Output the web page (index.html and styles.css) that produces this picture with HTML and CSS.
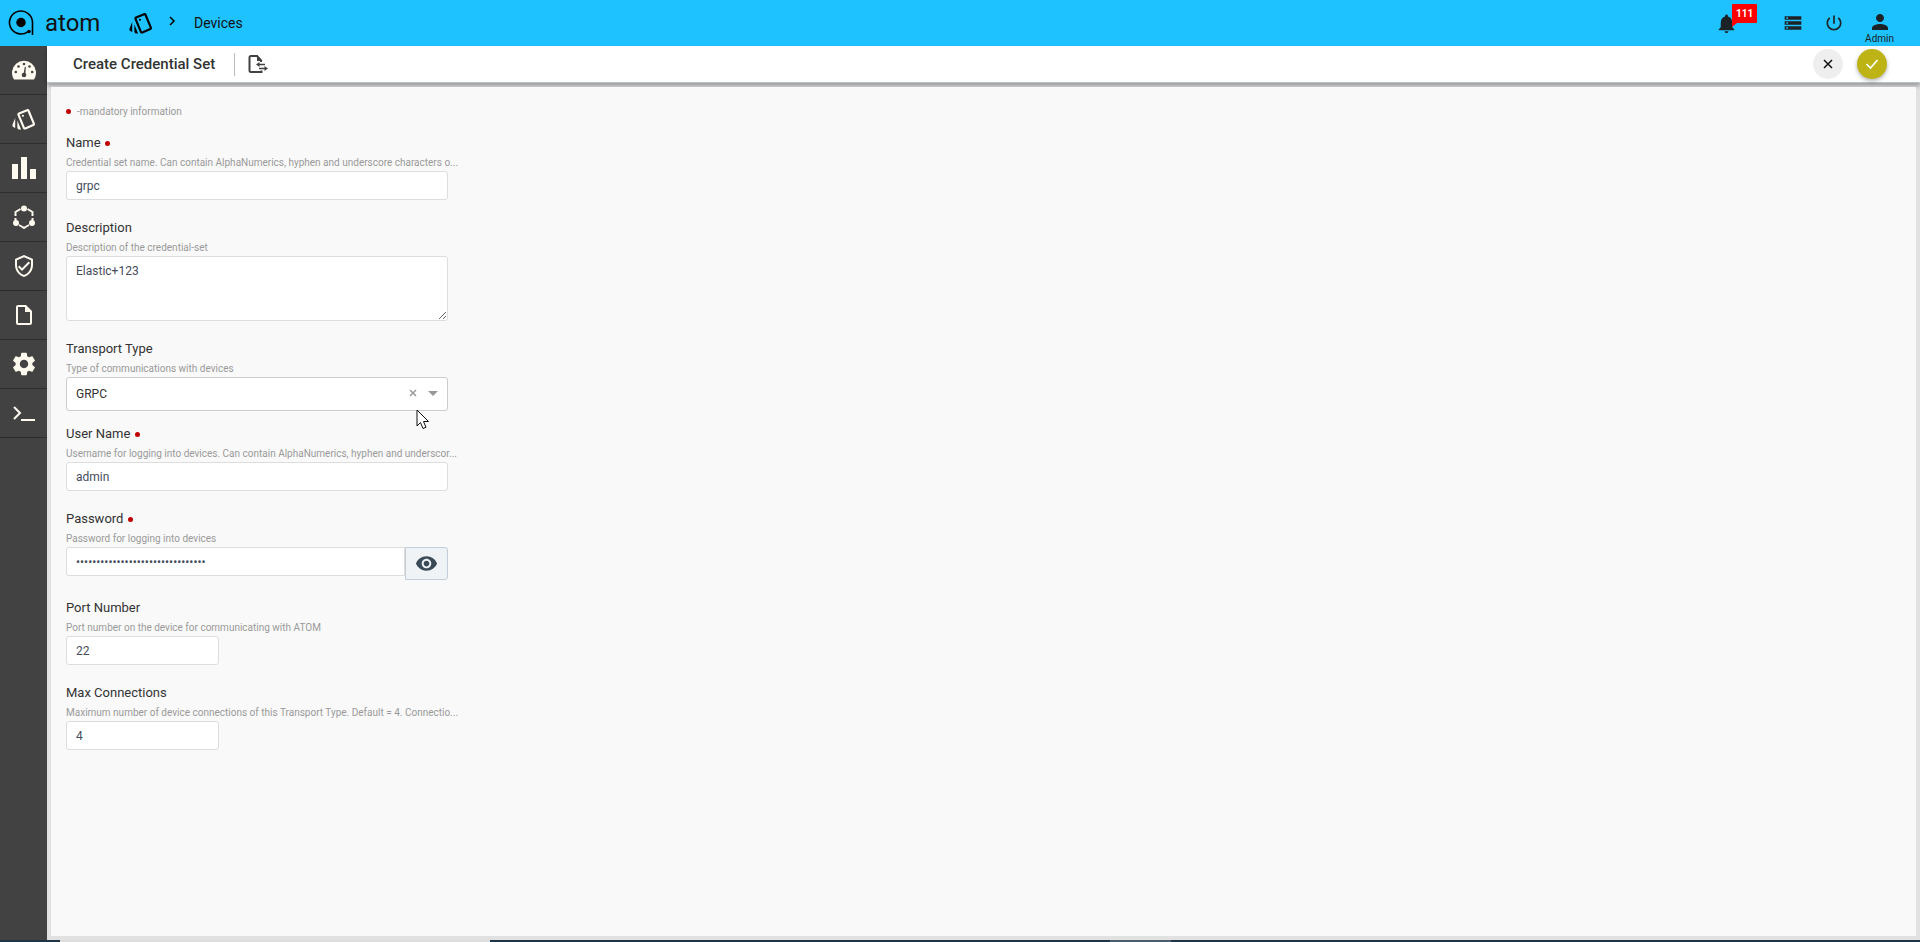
FILE: index.html
```html
<!DOCTYPE html>
<html lang="en">
<head>
	<meta charset="UTF-8">
	<title>atom - Create Credential Set</title>
	<link rel="stylesheet" href="styles.css">
</head>
<body>
	<!-- top bar -->
	<header class="topbar">
		<a class="logo" href="#">
			<svg width="28" height="28" viewBox="0 0 28 28">
				<path d="M24.5 26V13.500A11.500 11.500 0 1 0 20 22.600" fill="none" stroke="#000" stroke-width="1.600"/>
				<circle cx="13" cy="13.500" r="4.700"/>
				<circle cx="21" cy="22.500" r="1.800"/>
			</svg>
			<span>atom</span>
		</a>
		<nav class="breadcrumb">
			<a href="#" aria-label="Resources">
				<svg width="26" height="26" viewBox="0 0 24 24"><use href="#cards"/></svg>
			</a>
			<svg class="chevron" width="8" height="12" viewBox="0 0 8 12"><path d="M2 2l4 4-4 4" fill="none" stroke="#000" stroke-width="1.500"/></svg>
			<a href="#">Devices</a>
		</nav>
		<div class="tools">
			<button type="button" class="bell" aria-label="Notifications">
				<svg width="23" height="23" viewBox="0 0 24 24"><path d="M12 22c1.100 0 2-.9 2-2h-4c0 1.100.9 2 2 2zm6-6v-5c0-3.070-1.630-5.640-4.500-6.320V4c0-.83-.67-1.500-1.500-1.500s-1.500.67-1.500 1.500v.68C7.640 5.360 6 7.920 6 11v5l-2 2v1h16v-1l-2-2z"/></svg>
				<span class="badge">111</span>
			</button>
			<button type="button" aria-label="Tasks">
				<svg width="20" height="20" viewBox="0 0 24 24"><path d="M2 20h20v-4H2v4zm2-3h2v2H4v-2zM2 4v4h20V4H2zm4 3H4V5h2v2zm-4 7h20v-4H2v4zm2-3h2v2H4v-2z"/></svg>
			</button>
			<button type="button" aria-label="Log out">
				<svg width="20" height="20" viewBox="0 0 24 24"><path d="M13 3h-2v10h2V3zm4.830 2.170l-1.420 1.420C17.990 7.860 19 9.810 19 12c0 3.870-3.130 7-7 7s-7-3.130-7-7c0-2.190 1.010-4.140 2.580-5.420L6.170 5.170C4.230 6.820 3 9.260 3 12c0 4.970 4.030 9 9 9s9-4.030 9-9c0-2.740-1.230-5.180-3.170-6.830z"/></svg>
			</button>
			<button type="button" class="user">
				<svg width="24" height="24" viewBox="0 0 24 24"><path d="M12 12c2.210 0 4-1.790 4-4s-1.790-4-4-4-4 1.790-4 4 1.790 4 4 4zm0 2c-2.670 0-8 1.340-8 4v2h16v-2c0-2.660-5.330-4-8-4z"/></svg>
				<span>Admin</span>
			</button>
		</div>
	</header>

	<div class="layout">
		<!-- side menu -->
		<nav class="sidebar">
			<a href="#" aria-label="Dashboard">
				<svg width="24" height="20" viewBox="0 0 24 20">
					<path d="M2 19.500A12 12 0 1 1 22 19.500z"/>
					<g fill="#424242"><circle cx="3.800" cy="12" r="1.300"/><circle cx="6.500" cy="6.500" r="1.300"/><circle cx="12" cy="4" r="1.300"/><circle cx="17.500" cy="6.500" r="1.300"/><circle cx="20.200" cy="12" r="1.300"/><circle cx="12" cy="15" r="2.300"/><path d="M11.300 15l1.600-8.200 1 .2-.7 8z"/></g>
				</svg>
			</a>
			<a href="#" aria-label="Resources">
				<svg width="26" height="26" viewBox="0 0 24 24"><use href="#cards"/></svg>
			</a>
			<a href="#" aria-label="Reports">
				<svg width="24" height="24" viewBox="0 0 24 24"><path d="M0 8h6v15H0zM9 1h6v22H9zM18 13h6v10h-6z"/></svg>
			</a>
			<a href="#" aria-label="Topology">
				<svg width="24" height="24" viewBox="0 0 24 24">
					<path d="M8.500 4L3.500 7v4M15.500 4l5 3v4M3.500 13v3M20.500 13v3M7 20l3.500 2M17 20l-3.500 2M10.500 22l1.500 1 1.500-1" fill="none" stroke="#fffaf0" stroke-width="2"/>
					<circle cx="12" cy="3.500" r="3"/><circle cx="4" cy="18" r="3"/><circle cx="20" cy="18" r="3"/>
				</svg>
			</a>
			<a href="#" aria-label="Compliance">
				<svg width="24" height="24" viewBox="0 0 24 24"><path d="M12 1L3 5v6c0 5.550 3.840 10.740 9 12 5.160-1.260 9-6.450 9-12V5l-9-4zm7 10c0 4.520-2.980 8.690-7 9.930-4.020-1.240-7-5.410-7-9.930V6.300l7-3.110 7 3.110V11zm-11.590.59L6 13l4 4 8-8-1.410-1.420L10 14.170z"/></svg>
			</a>
			<a href="#" aria-label="Documents">
				<svg width="24" height="24" viewBox="0 0 24 24"><path d="M14 2H6c-1.100 0-2 .9-2 2v16c0 1.100.9 2 2 2h12c1.100 0 2-.9 2-2V8l-6-6zM6 20V4h7v5h5v11H6z"/></svg>
			</a>
			<a href="#" aria-label="Settings">
				<svg width="28" height="28" viewBox="0 0 24 24"><path d="M19.140 12.940c.04-.3.06-.61.06-.94 0-.32-.02-.64-.07-.94l2.030-1.580c.18-.14.23-.41.12-.61l-1.920-3.320c-.12-.22-.37-.29-.59-.22l-2.390.96c-.5-.38-1.030-.7-1.620-.94l-.36-2.540c-.04-.24-.24-.41-.48-.41h-3.840c-.24 0-.43.17-.47.41l-.36 2.540c-.59.24-1.130.57-1.620.94l-2.390-.96c-.22-.08-.47 0-.59.22L2.740 8.870c-.12.21-.08.47.12.61l2.030 1.580c-.05.3-.09.63-.09.94s.02.64.07.94l-2.030 1.580c-.18.14-.23.41-.12.61l1.920 3.320c.12.22.37.29.59.22l2.390-.96c.5.38 1.030.7 1.620.94l.36 2.540c.05.24.24.41.48.41h3.840c.24 0 .44-.17.47-.41l.36-2.540c.59-.24 1.130-.56 1.620-.94l2.390.96c.22.08.47 0 .59-.22l1.920-3.320c.12-.22.07-.47-.12-.61l-2.010-1.580zM12 15.600c-1.980 0-3.600-1.620-3.600-3.600s1.620-3.600 3.600-3.600 3.600 1.620 3.600 3.600-1.620 3.600-3.600 3.600z"/></svg>
			</a>
			<a href="#" aria-label="Terminal">
				<svg width="24" height="24" viewBox="0 0 24 24"><path d="M2 6l6 6-6 6M9 19h14" fill="none" stroke="#fffaf0" stroke-width="2"/></svg>
			</a>
		</nav>

		<main class="main">
			<div class="titlebar">
				<h1>Create Credential Set</h1>
				<button type="button" class="export" aria-label="Export">
					<svg width="20" height="20" viewBox="0 0 20 20">
						<path d="M13 8V6.500L9 2H3C2 2 1.500 2.500 1.500 3.500v13C1.500 17.500 2 18 3 18h10.500v-1.500" fill="none" stroke="#424242" stroke-width="2"/>
						<path d="M9 1l5.500 6H9zM11.500 8v5L8 10.500zM11 9.800h6v1.400h-6zM11 13.800h6v1.400h-6zM16.500 12l3.500 2.500-3.500 2.500z" fill="#424242"/>
					</svg>
				</button>
				<div class="actions">
					<button type="button" class="round cancel" aria-label="Cancel">
						<svg width="10" height="10" viewBox="0 0 10 10"><path d="M1 1l8 8M9 1L1 9" stroke="#111" stroke-width="1.500"/></svg>
					</button>
					<button type="submit" form="credential-form" class="round save" aria-label="Save">
						<svg width="14" height="12" viewBox="0 0 14 12"><path d="M1.500 6l4 4 7-8" fill="none" stroke="#fff" stroke-width="1.700"/></svg>
					</button>
				</div>
			</div>

			<div class="content">
				<form id="credential-form" class="form">
					<p class="mandatory"><i class="dot"></i>-mandatory information</p>

					<div class="field">
						<label for="name">Name <i class="dot"></i></label>
						<p class="hint">Credential set name. Can contain AlphaNumerics, hyphen and underscore characters o...</p>
						<input type="text" id="name" value="grpc">
					</div>

					<div class="field">
						<label for="description">Description</label>
						<p class="hint">Description of the credential-set</p>
						<textarea id="description">Elastic+123</textarea>
					</div>

					<div class="field field-select">
						<label for="transport">Transport Type</label>
						<p class="hint">Type of communications with devices</p>
						<div class="select-box">
							<select id="transport">
								<option>GRPC</option>
							</select>
							<button type="button" class="clear" aria-label="Clear">
								<svg width="8" height="8" viewBox="0 0 8 8"><path d="M1 1l6 6M7 1L1 7" stroke="#999" stroke-width="1.500"/></svg>
							</button>
							<svg class="caret" width="10" height="5" viewBox="0 0 10 5"><path d="M0 0h10L5 5z" fill="#999"/></svg>
							<svg class="pointer" width="14" height="21" viewBox="0 0 14 21"><path d="M1 1v16l3.500-3.500 2.500 6 3-1.200L7.500 12.500h5z" fill="#fff" stroke="#111" stroke-width="1"/></svg>
						</div>
					</div>

					<div class="field">
						<label for="username">User Name <i class="dot"></i></label>
						<p class="hint">Username for logging into devices. Can contain AlphaNumerics, hyphen and underscor...</p>
						<input type="text" id="username" value="admin">
					</div>

					<div class="field">
						<label for="password">Password <i class="dot"></i></label>
						<p class="hint">Password for logging into devices</p>
						<div class="password-box">
							<input type="password" id="password" value="12345678901234567890123456789012">
							<button type="button" aria-label="Show password">
								<svg width="23" height="23" viewBox="0 0 24 24"><path d="M12 4.500C7 4.500 2.730 7.610 1 12c1.730 4.390 6 7.500 11 7.500s9.270-3.110 11-7.500c-1.730-4.390-6-7.500-11-7.500zM12 17c-2.760 0-5-2.240-5-5s2.240-5 5-5 5 2.240 5 5-2.240 5-5 5zm0-8c-1.660 0-3 1.340-3 3s1.340 3 3 3 3-1.340 3-3-1.340-3-3-3z" fill="#3b4a57"/></svg>
							</button>
						</div>
					</div>

					<div class="field">
						<label for="port">Port Number</label>
						<p class="hint">Port number on the device for communicating with ATOM</p>
						<input type="text" id="port" class="short" value="22">
					</div>

					<div class="field">
						<label for="max">Max Connections</label>
						<p class="hint">Maximum number of device connections of this Transport Type. Default = 4. Connectio...</p>
						<input type="text" id="max" class="short" value="4">
					</div>
				</form>
			</div>
		</main>
	</div>

	<footer class="strip"><span class="strip-open"></span><span class="strip-item"></span></footer>

	<!-- shared icon -->
	<svg width="0" height="0" class="defs">
		<symbol id="cards" viewBox="0 0 24 24"><path d="M2.530 19.650l1.340.56v-9.030l-2.430 5.860c-.41 1.020.08 2.190 1.090 2.610zm19.500-3.700L17.070 3.980c-.31-.75-1.040-1.210-1.810-1.230-.26 0-.53.04-.79.15L7.100 5.950c-.75.31-1.210 1.030-1.230 1.800-.01.27.04.54.15.8l4.960 11.970c.31.76 1.050 1.220 1.830 1.230.26 0 .52-.05.77-.15l7.360-3.050c1.020-.42 1.510-1.590 1.090-2.600zm-9.200 3.800L7.870 7.790l7.350-3.040h.01l4.950 11.950-7.350 3.050zM5.880 19.750c0 1.100.9 2 2 2h1.450l-3.450-8.340v6.340z"/><circle cx="11" cy="9" r="1"/></symbol>
	</svg>
</body>
</html>
```

FILE: styles.css
```css
* {
	box-sizing: border-box;
}

body {
	margin: 0;
	height: 100vh;
	display: flex;
	flex-direction: column;
	font-family: Roboto, "Liberation Sans", sans-serif;
	font-size: 13px;
	color: #333;
}

button {
	border: none;
	background: none;
	padding: 0;
	font-family: inherit;
	cursor: pointer;
}

a {
	color: inherit;
	text-decoration: none;
}

svg {
	display: block;
}

.defs {
	position: absolute;
}

/* top bar */
.topbar {
	display: flex;
	align-items: center;
	height: 46px;
	flex-shrink: 0;
	padding: 0 26px 0 8px;
	background-color: #1ec2ff;
	color: #111;
}

.logo {
	display: flex;
	align-items: center;
	gap: 9px;
	width: 120px;
	font-size: 24px;
	line-height: 28px;
}

.breadcrumb {
	display: flex;
	align-items: center;
	font-size: 14px;
}

.chevron {
	margin: 0 18px 4px 14px;
}

.tools {
	display: flex;
	align-items: center;
	margin-left: auto;
	gap: 21px;
}

.tools svg {
	fill: #1c2226;
}

.bell {
	position: relative;
	margin-right: 24px;
}

.badge {
	position: absolute;
	left: 17px;
	top: -8px;
	width: 25px;
	height: 19px;
	line-height: 20px;
	border-radius: 1px;
	background-color: #f00;
	color: #fff;
	font-size: 10px;
	font-weight: bold;
	text-align: center;
}

.badge::after {
	content: "";
	position: absolute;
	left: 0;
	top: 19px;
	border-top: 4px solid #f00;
	border-right: 5px solid transparent;
}

.user {
	display: flex;
	flex-direction: column;
	align-items: center;
	padding-top: 8px;
	font-size: 10px;
	line-height: 10px;
	color: #1c2226;
}

/* layout */
.layout {
	display: flex;
	flex: 1;
	min-height: 0;
}

.sidebar {
	width: 47px;
	flex-shrink: 0;
	background-color: #424242;
}

.sidebar a {
	display: flex;
	align-items: center;
	justify-content: center;
	height: 49px;
	border-bottom: 1px solid #2e2e2e;
}

.sidebar svg {
	fill: #fffaf0;
}

.main {
	display: flex;
	flex-direction: column;
	flex: 1;
	min-width: 0;
	background-color: #e1e1e1;
}

.titlebar {
	display: flex;
	align-items: center;
	height: 37px;
	flex-shrink: 0;
	padding: 0 33px 0 26px;
	background-color: #fff;
	border-bottom: 1px solid #b8c4ca;
	box-shadow: 0 3px 4px rgba(0, 0, 0, 0.3);
}

.titlebar h1 {
	margin: 0;
	padding-right: 19px;
	border-right: 1px solid #bbb;
	font-size: 15px;
	font-weight: 500;
	line-height: 23px;
}

.export {
	margin-left: 13px;
}

.actions {
	display: flex;
	gap: 14px;
	margin-left: auto;
}

.round {
	display: flex;
	align-items: center;
	justify-content: center;
	width: 30px;
	height: 30px;
	border-radius: 50%;
}

.cancel {
	background-color: #eee;
}

.save {
	background-color: #bdb315;
	box-shadow: 0 2px 4px rgba(0, 0, 0, 0.3);
}

.content {
	flex: 1;
	min-height: 0;
	margin: 4px;
	padding: 14px 15px;
	background-color: #f9f9f9;
}

/* form */
.form {
	width: 382px;
}

.dot {
	display: inline-block;
	width: 5px;
	height: 5px;
	border-radius: 50%;
	background-color: #c00000;
	vertical-align: 1px;
}

.field .dot {
	margin-left: 1px;
}

.mandatory {
	margin: 0 0 9px;
	font-size: 10px;
	line-height: 22px;
	color: #999;
}

.mandatory .dot {
	margin-right: 6px;
}

.field {
	margin-bottom: 17px;
}

.field-select {
	margin-bottom: 12px;
}

.field label {
	display: block;
	line-height: 22px;
}

.hint {
	margin: 0;
	font-size: 10px;
	line-height: 17px;
	color: #999;
	white-space: nowrap;
}

input,
textarea,
select {
	display: block;
	width: 100%;
	height: 29px;
	margin: 0;
	padding: 0 9px;
	border: 1px solid #ddd;
	border-radius: 3px;
	background-color: #fff;
	font-family: inherit;
	font-size: 12px;
	color: #454d5d;
	outline: none;
}

textarea {
	height: 65px;
	padding: 7px 9px;
}

.short {
	width: 153px;
}

.select-box {
	position: relative;
}

select {
	height: 34px;
	border-color: #ccc;
	appearance: none;
	color: #333;
}

.clear {
	position: absolute;
	right: 31px;
	top: 12px;
}

.caret {
	position: absolute;
	right: 10px;
	top: 14px;
}

.pointer {
	position: absolute;
	right: 18px;
	top: 32px;
}

.password-box {
	display: flex;
	align-items: flex-start;
}

.password-box input {
	flex: 1;
	border-radius: 3px 0 0 3px;
}

.password-box button {
	display: flex;
	align-items: center;
	justify-content: center;
	width: 43px;
	height: 33px;
	border: 1px solid #c3ced8;
	border-radius: 0 3px 3px 0;
	background-color: #eff3f6;
}

/* bottom strip */
.strip {
	display: flex;
	height: 2px;
	flex-shrink: 0;
	padding-left: 60px;
	background-color: #1f3445;
}

.strip-open {
	width: 430px;
	background-color: #ddd;
}

.strip-item {
	width: 61px;
	margin-left: 620px;
	background-color: #4c5c6a;
}
```
